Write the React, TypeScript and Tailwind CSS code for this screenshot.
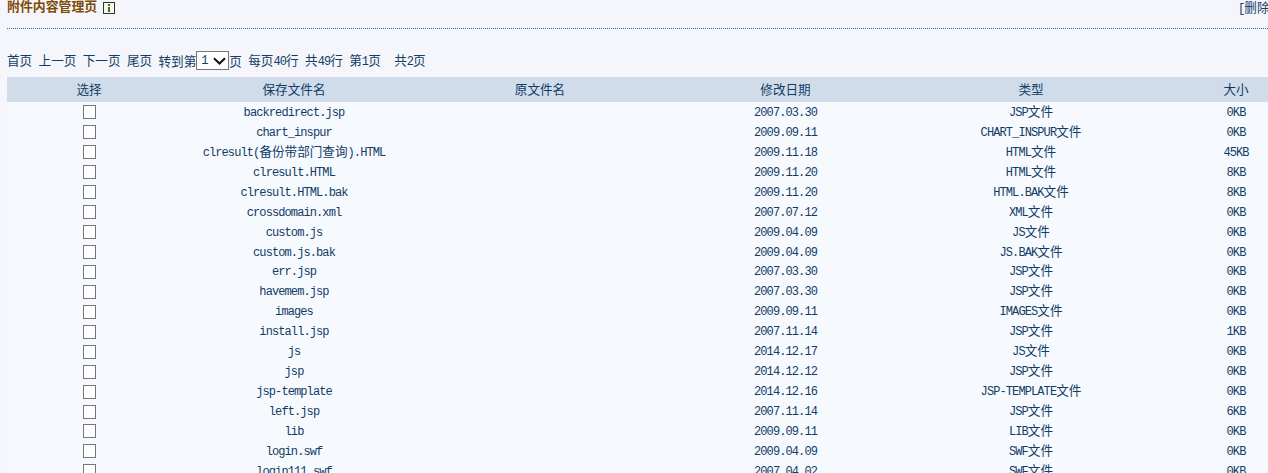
import React from 'react';

const files = [
  ['backredirect.jsp', '2007.03.30', 'JSP文件', '0KB'],
  ['chart_inspur', '2009.09.11', 'CHART_INSPUR文件', '0KB'],
  ['clresult(备份带部门查询).HTML', '2009.11.18', 'HTML文件', '45KB'],
  ['clresult.HTML', '2009.11.20', 'HTML文件', '8KB'],
  ['clresult.HTML.bak', '2009.11.20', 'HTML.BAK文件', '8KB'],
  ['crossdomain.xml', '2007.07.12', 'XML文件', '0KB'],
  ['custom.js', '2009.04.09', 'JS文件', '0KB'],
  ['custom.js.bak', '2009.04.09', 'JS.BAK文件', '0KB'],
  ['err.jsp', '2007.03.30', 'JSP文件', '0KB'],
  ['havemem.jsp', '2007.03.30', 'JSP文件', '0KB'],
  ['images', '2009.09.11', 'IMAGES文件', '0KB'],
  ['install.jsp', '2007.11.14', 'JSP文件', '1KB'],
  ['js', '2014.12.17', 'JS文件', '0KB'],
  ['jsp', '2014.12.12', 'JSP文件', '0KB'],
  ['jsp-template', '2014.12.16', 'JSP-TEMPLATE文件', '0KB'],
  ['left.jsp', '2007.11.14', 'JSP文件', '6KB'],
  ['lib', '2009.09.11', 'LIB文件', '0KB'],
  ['login.swf', '2009.04.09', 'SWF文件', '0KB'],
  ['login111.swf', '2007.04.02', 'SWF文件', '0KB'],
];

// latin runs are half width, cjk runs full width, like the original SimSun text
function Mixed({ text }: { text: string }) {
  const parts = text.match(/[\u4e00-\u9fff]+|[^\u4e00-\u9fff]+/g) || [];
  return (
    <>
      {parts.map((part, i) =>
        /[\u4e00-\u9fff]/.test(part) ? (
          <span key={i} className="text-[12.6px]">{part}</span>
        ) : (
          <span key={i} className="text-[12px] tracking-[-0.9px]">{part}</span>
        )
      )}
    </>
  );
}

const rowGrid = 'grid grid-cols-[164px_246px_246px_245px_246px_164px] items-center text-center';

export default function App() {
  return (
    <div className="h-screen w-[1268px] overflow-hidden bg-[#f4f6fb] text-[#123c66] font-['Liberation_Mono','Noto_Sans_CJK_SC',monospace] leading-none">
      <div className="w-[1318px] pl-[7px]">
        <div className="flex h-[29px] w-[1261px] border-b border-dotted border-[#2f6a9e]">
          <div className="flex h-[16px] flex-1 items-center gap-[6px]">
            <span className="text-[12.9px] font-bold text-[#7f4a05]">附件内容管理页</span>
            <svg width="12" height="12" viewBox="0 0 12 12" className="mt-[-1px]">
              <rect x="0.5" y="0.5" width="11" height="11" fill="#f4f6e8" stroke="#333" />
              <rect x="5" y="2" width="2" height="2" fill="#4a6a20" />
              <rect x="5" y="5" width="2" height="5" fill="#4a6a20" />
            </svg>
          </div>
          <div className="h-[16px] w-[30px] overflow-hidden whitespace-nowrap">
            <Mixed text="[删除" />
          </div>
        </div>

        <div className="flex h-[48px] items-center gap-[6.4px] pt-[15px]">
          <a><Mixed text="首页" /></a>
          <a><Mixed text="上一页" /></a>
          <a><Mixed text="下一页" /></a>
          <a><Mixed text="尾页" /></a>
          <div className="flex items-center">
            <span className="pt-[2px]"><Mixed text="转到第" /></span>
            <div className="relative">
              <select className="block h-[19px] w-[33px] appearance-none border border-[#767676] bg-white pl-[4px] text-[12px] text-[#123c66]">
                <option>1</option>
              </select>
              <svg width="13" height="8" viewBox="0 0 13 8" className="pointer-events-none absolute right-[3px] top-[6px]">
                <path d="M1 1.2l5.5 5.3L12 1.2" fill="none" stroke="#111" strokeWidth="2" />
              </svg>
            </div>
            <span className="pt-[2px]"><Mixed text="页" /></span>
          </div>
          <span><Mixed text="每页40行" /></span>
          <span><Mixed text="共49行" /></span>
          <span><Mixed text="第1页" /></span>
          <span className="ml-[7px]"><Mixed text="共2页" /></span>
        </div>

        <div className={`${rowGrid} h-[25px] bg-[#d0dcea]`}>
          <div><Mixed text="选择" /></div>
          <div><Mixed text="保存文件名" /></div>
          <div><Mixed text="原文件名" /></div>
          <div><Mixed text="修改日期" /></div>
          <div><Mixed text="类型" /></div>
          <div><Mixed text="大小" /></div>
        </div>

        <div className="bg-[#f6f9fe]">
          {files.map((f) => (
            <div key={f[0]} className={`${rowGrid} h-[19.94px]`}>
              <div className="flex justify-center">
                <input type="checkbox" className="mt-[1px] h-[14px] w-[13px] appearance-none border border-[#767676] bg-white" />
              </div>
              <div><Mixed text={f[0]} /></div>
              <div></div>
              <div><Mixed text={f[1]} /></div>
              <div><Mixed text={f[2]} /></div>
              <div><Mixed text={f[3]} /></div>
            </div>
          ))}
        </div>
      </div>
    </div>
  );
}
